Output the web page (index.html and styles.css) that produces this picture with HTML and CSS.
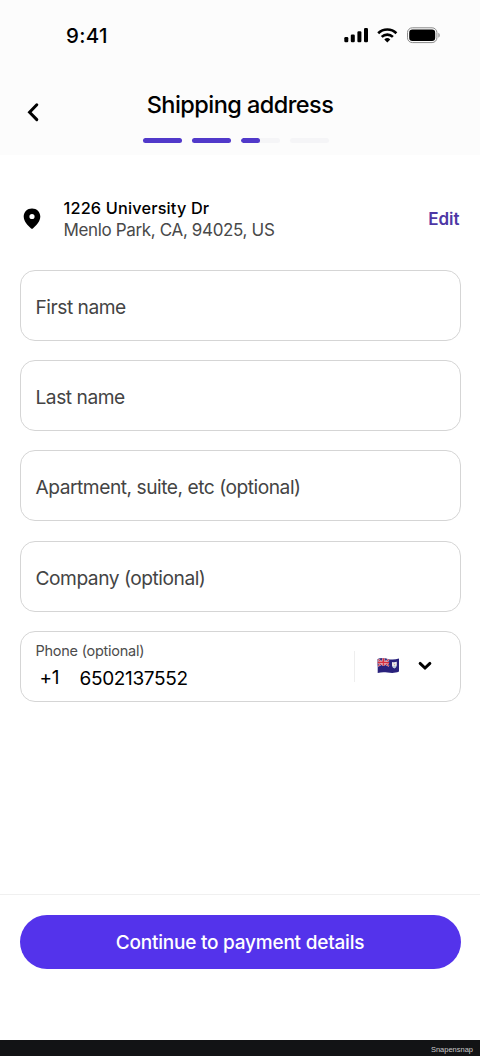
FILE: index.html
```html
<!DOCTYPE html>
<html lang="en">
<head>
<meta charset="utf-8">
<meta name="viewport" content="width=device-width, initial-scale=1">
<title>Shipping address</title>
<link rel="stylesheet" href="styles.css">
</head>
<body>
<div class="screen">
  <header class="header">
    <div class="status-bar">
      <span class="time">9:41</span>
      <svg class="status-icons" width="98" height="20" viewBox="0 0 98 20">
        <rect x="0.3" y="12" width="4" height="5.3" rx="1.2"/>
        <rect x="6.8" y="9.5" width="4" height="7.8" rx="1.2"/>
        <rect x="13.4" y="6.3" width="4" height="11" rx="1.2"/>
        <rect x="20" y="3" width="4" height="14.3" rx="1.2"/>
        <g fill="none" stroke="#000" stroke-width="2.6">
          <path d="M34.2 8.2a13 13 0 0 1 18.2 0"/>
          <path d="M37.7 11.9a8.1 8.1 0 0 1 11.2 0"/>
        </g>
        <path d="M43.3 17.5l-3-3.1a4.6 4.6 0 0 1 6 0z"/>
        <rect x="63.5" y="2.8" width="29.4" height="14.8" rx="4.8" fill="none" stroke="#8b8b8b"/>
        <rect x="65.2" y="4.5" width="26" height="11.4" rx="3.2"/>
        <path d="M94.3 7.8c2 .8 2 4.2 0 5z" fill="#999"/>
      </svg>
    </div>
    <div class="nav">
      <button class="back" aria-label="Back">
        <svg width="14" height="20" viewBox="0 0 14 20"><path d="M10.800 2.800L3.600 10.200l7.200 7.400" fill="none" stroke="#000" stroke-width="3" stroke-linecap="round" stroke-linejoin="miter"/></svg>
      </button>
      <div class="heading">
        <h1 class="title">Shipping address</h1>
        <div class="steps">
          <span class="step done"></span>
          <span class="step done"></span>
          <span class="step half"></span>
          <span class="step"></span>
        </div>
      </div>
    </div>
  </header>
  <main class="content">
    <section class="address">
      <svg class="pin" width="18" height="22" viewBox="0 0 18 22"><path fill-rule="evenodd" d="M9 .4C4.200.4.700 3.900.700 8.600c0 5 4.200 9.100 7.400 11.900q.9.700 1.800 0c3.200-2.800 7.400-6.900 7.400-11.900C17.300 3.900 13.800.4 9 .4zM9 5.900a2.600 2.600 0 1 1 0 5.200 2.600 2.600 0 0 1 0-5.200z"/></svg>
      <div class="address-text">
        <div class="street">1226 University Dr</div>
        <div class="city">Menlo Park, CA, 94025, US</div>
      </div>
      <a class="edit">Edit</a>
    </section>
    <form class="fields">
      <div class="field"><span class="label">First name</span></div>
      <div class="field"><span class="label">Last name</span></div>
      <div class="field"><span class="label">Apartment, suite, etc (optional)</span></div>
      <div class="field"><span class="label">Company (optional)</span></div>
      <div class="field phone">
        <div class="phone-main">
          <div class="phone-label">Phone (optional)</div>
          <div class="phone-value"><span class="code">+1</span><span class="number">6502137552</span></div>
        </div>
        <div class="country">
          <svg class="flag" width="23" height="18" viewBox="0 0 23 18">
            <path d="M.7 2.100C4 .7 7 1.300 10.500 2s7.500.8 11.500-.4v13c-4 1.800-8 1.500-11.500.9s-6.500-.5-9.800.6z" fill="#29217c"/>
            <path d="M.7 2.100C4 .7 8 1.300 12 2.200v7.200C8 8.500 4 8.300.7 9.300z" fill="#3b307e"/>
            <path d="M1 2.500L12 9M1 9L12 2.500" stroke="#ead9e5" stroke-width="1.500"/>
            <path d="M1 2.500L12 9M1 9L12 2.500" stroke="#ce3140" stroke-width="1"/>
            <path d="M6.400 1.300v7.400M.7 5.600c4-.8 8-.3 11.300.3" fill="none" stroke="#f2dce2" stroke-width="2.400"/>
            <path d="M6.400 1.300v7.400M.7 5.600c4-.8 8-.3 11.300.3" fill="none" stroke="#d82e3d" stroke-width="1.600"/>
            <path d="M15 5q2.400.5 4.800-.2v3.500q-.3 2.200-2.400 3.100Q15.200 10.500 15 8.400z" fill="#e9e8ed"/>
            <path d="M16.500 6.600l1.800.6-.8 1.500z" fill="#c9a18f"/>
            <path d="M15.600 9.300h3.700l-1.900 1.600z" fill="#a6c3d9"/>
          </svg>
          <svg class="chevron" width="16" height="12" viewBox="0 0 16 12"><path d="M3.100 3.400L8 8.100l4.900-4.700" fill="none" stroke="#000" stroke-width="2.900" stroke-linecap="round"/></svg>
        </div>
      </div>
    </form>
  </main>
  <footer class="footer">
    <button class="continue"><span class="continue-text">Continue to payment details</span></button>
  </footer>
  <div class="credit">Snapensnap</div>
</div>
</body>
</html>
```
FILE: styles.css
```css
* { box-sizing: border-box; }
body { margin: 0; background: #fff; color: #000; font-family: Inter, "Liberation Sans", sans-serif; }
button { border: 0; padding: 0; background: none; font: inherit; }
svg { display: block; flex: none; }
.screen { display: flex; flex-direction: column; height: 1056px; overflow: hidden; white-space: nowrap; }
.header { height: 155px; background: #fcfcfc; }
.status-bar { display: flex; justify-content: space-between; height: 72px; padding: 24px 38px 0 66px; }
.time { font-size: 20.500px; line-height: 24px; font-weight: 500; letter-spacing: 0.3px; }
.status-icons { margin-top: 1px; }
.nav { display: grid; grid-template-columns: 60px 1fr 60px; }
.back { align-self: start; width: 14px; height: 20px; margin: 30px 0 0 26px; }
.heading { display: flex; flex-direction: column; align-items: center; padding-top: 18px; }
.title { margin: 0; font-size: 23.500px; line-height: 29px; font-weight: 500; letter-spacing: -0.55px; }
.steps { display: flex; gap: 10px; margin: 19px 0 0 -9px; }
.step { width: 39px; height: 5px; border-radius: 3px; background: #f5f5f7; overflow: hidden; }
.step.done { background: #5139ca; }
.step.half::before { content: ""; display: block; width: 19px; height: 5px; border-radius: 3px; background: #5139ca; }
.content { flex: 1; padding: 0 19.500px; }
.address { display: flex; height: 114.700px; padding-top: 42px; }
.pin { margin: 11px 23px 0 3px; }
.address-text { flex: 1; }
.street { font-size: 16.300px; line-height: 22px; font-weight: 500; letter-spacing: 0.17px; }
.city { font-size: 17px; line-height: 22px; letter-spacing: -0.35px; color: #494949; }
.edit { margin: 11px 1px 0 0; font-size: 17px; line-height: 22px; font-weight: 600; color: #4d37a5; }
.fields { display: flex; flex-direction: column; gap: 19.300px; }
.field { display: flex; align-items: center; height: 71px; padding: 3px 15px 0; border: 1px solid #d5d5d5; border-radius: 15px; }
.label { font-size: 19.200px; line-height: 24px; letter-spacing: -0.48px; color: #444; }
.phone { padding: 0 15px; }
.phone-main { flex: 1; }
.phone-label { font-size: 14.500px; line-height: 20px; letter-spacing: -0.25px; color: #4c4c4c; }
.phone-value { display: flex; font-size: 19px; line-height: 24px; padding: 6px 0 0 4px; }
.code { width: 40px; margin-top: -1px; letter-spacing: -0.3px; }
.number { letter-spacing: -0.35px; }
.country { display: flex; align-items: center; height: 31px; padding-left: 22px; border-left: 1px solid #eee; width: 91px; }
.chevron { margin-left: 17px; }
.footer { height: 146px; padding: 20px 19.500px 0; border-top: 1px solid #f0f0f0; }
.continue { display: block; width: 100%; height: 54px; padding-top: 2px; border-radius: 27px; background: #5433eb; color: #fff; }
.continue-text { font-size: 19px; line-height: 24px; font-weight: 500; letter-spacing: -0.22px; }
.credit { height: 16px; padding-right: 7px; background: #121315; color: #c9c9c9; font: 7.500px/19px "Liberation Sans", sans-serif; text-align: right; }
```
